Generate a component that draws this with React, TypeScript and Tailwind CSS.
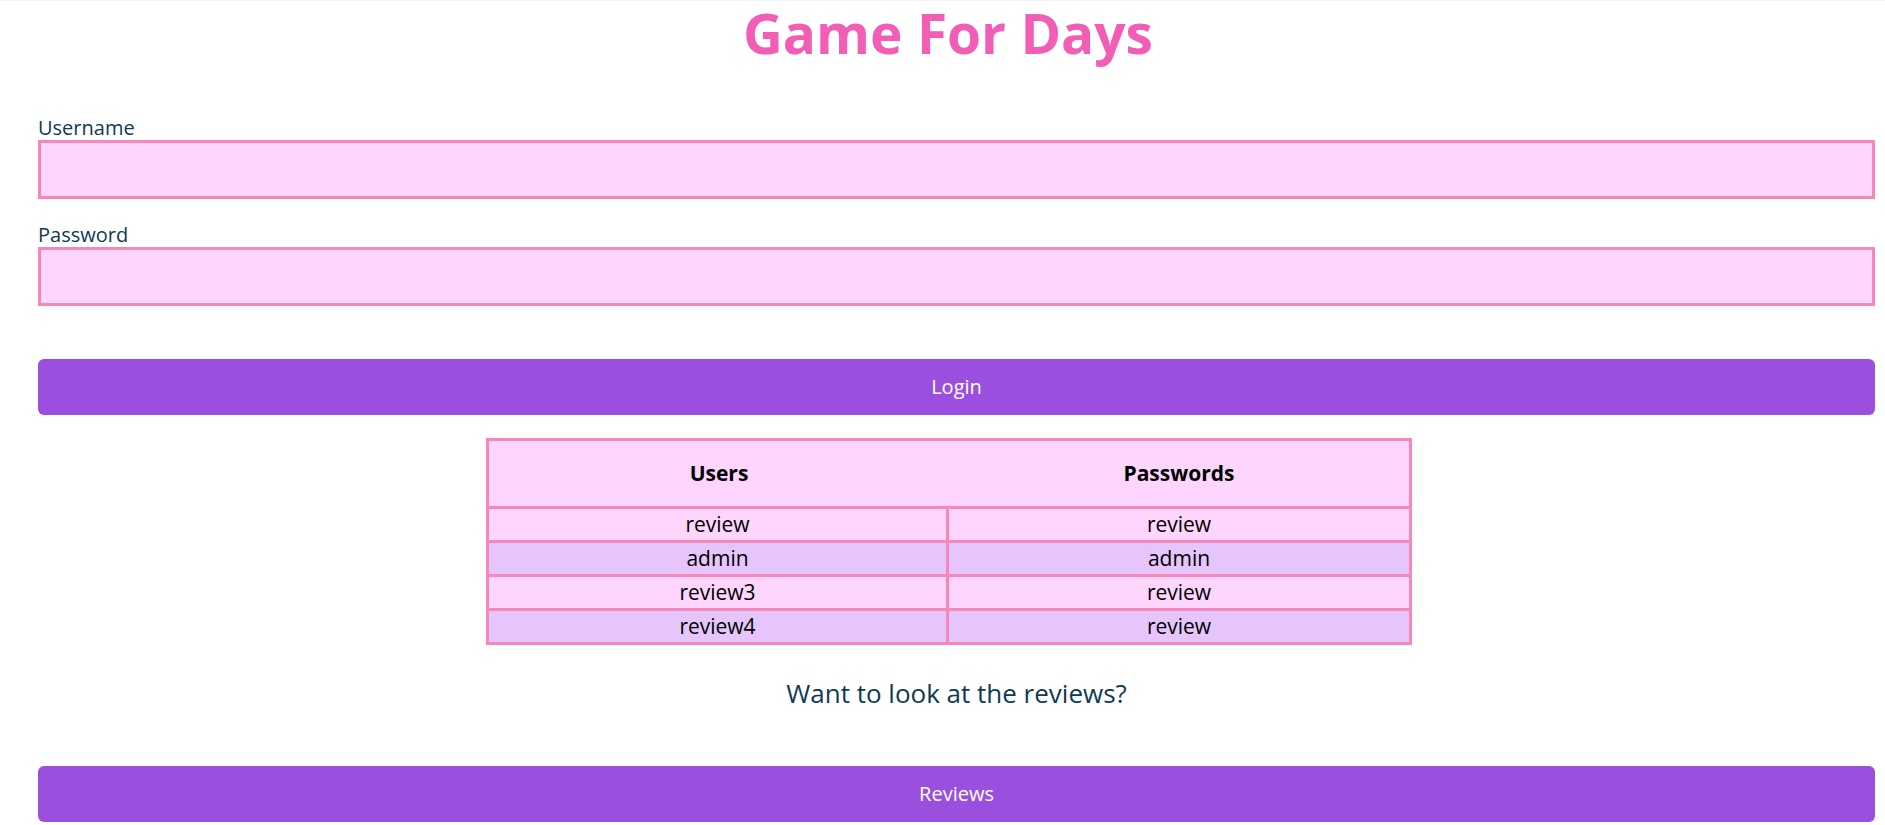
import React from "react";

const rows = [
  ["review", "review"],
  ["admin", "admin"],
  ["review3", "review"],
  ["review4", "review"],
];

export default function App() {
  return (
    <div className="min-h-screen bg-white font-['Open_Sans','Noto_Sans',sans-serif]">
      <div className="h-px bg-[#eef4f8]" />
      <h1 className="-mt-[6px] text-center text-[55px] leading-[75px] font-bold text-[#f25db5] pl-[11px]">Game For Days</h1>
      <div className="pl-[38px] pr-[10px] pt-[46px]">
        <label className="block text-[20px] leading-[24px] text-[#0f3a55]">Username</label>
        <div className="h-[59px] border-[3px] border-[#f687b8] bg-[#fdd5fd]" />
        <label className="block mt-[24px] text-[20px] leading-[24px] text-[#0f3a55]">Password</label>
        <div className="h-[59px] border-[3px] border-[#f687b8] bg-[#fdd5fd]" />
        <button className="mt-[53px] w-full h-[56px] rounded-[6px] bg-[#9b4fde] text-white text-[20px]">Login</button>
        <div className="mt-[23px] ml-[448px] w-[926px] border-[3px] border-[#f687b8] text-black text-[21px]">
          <div className="grid grid-cols-2 h-[65px] bg-[#fdd5fd] font-bold items-center text-center">
            <div>Users</div>
            <div>Passwords</div>
          </div>
          {rows.map((r, i) => (
            <div
              key={i}
              className={`grid grid-cols-2 h-[34px] border-t-[3px] border-[#f687b8] items-center text-center ${i % 2 === 0 ? "bg-[#fdd5fd]" : "bg-[#e6c5fc]"}`}
            >
              <div className="h-full flex items-center justify-center border-r-[3px] border-[#f687b8]">{r[0]}</div>
              <div className="h-full flex items-center justify-center">{r[1]}</div>
            </div>
          ))}
        </div>
        <p className="mt-[32px] text-center text-[26px] leading-[32px] text-[#0f3a55]">Want to look at the reviews?</p>
        <button className="mt-[57px] w-full h-[56px] rounded-[6px] bg-[#9b4fde] text-white text-[20px]">Reviews</button>
      </div>
    </div>
  );
}
